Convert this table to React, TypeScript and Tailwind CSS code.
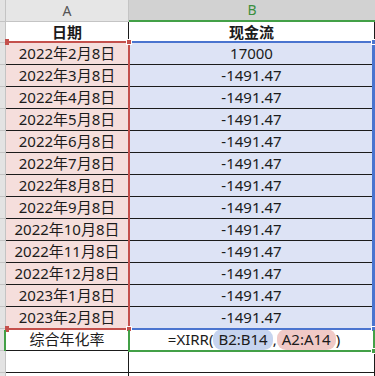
// Spreadsheet view: XIRR cash flow table with range highlights.

const ROWS: { date: string; flow: string }[] = [
  { date: "2022年2月8日", flow: "17000" },
  { date: "2022年3月8日", flow: "-1491.47" },
  { date: "2022年4月8日", flow: "-1491.47" },
  { date: "2022年5月8日", flow: "-1491.47" },
  { date: "2022年6月8日", flow: "-1491.47" },
  { date: "2022年7月8日", flow: "-1491.47" },
  { date: "2022年8月8日", flow: "-1491.47" },
  { date: "2022年9月8日", flow: "-1491.47" },
  { date: "2022年10月8日", flow: "-1491.47" },
  { date: "2022年11月8日", flow: "-1491.47" },
  { date: "2022年12月8日", flow: "-1491.47" },
  { date: "2023年1月8日", flow: "-1491.47" },
  { date: "2023年2月8日", flow: "-1491.47" },
];

export default function App() {
  return (
    <div className="relative h-[376px] w-[375px] overflow-hidden bg-white font-['Noto_Sans','Noto_Sans_CJK_SC',sans-serif] text-[15px] leading-none text-[#1b1b1b]">
      {/* Column headers */}
      <div className="flex h-[22px]">
        <div className="w-[6px] border-r border-b border-[#c4c4c4] bg-[#e3e3e3]" />
        <div className="flex w-[123px] items-center justify-center border-r border-b border-[#c4c4c4] bg-[#e6e6e6] text-[14px] text-[#555]">
          A
        </div>
        <div className="flex flex-1 items-center justify-center border-b-2 border-[#43a047] bg-[#d2d2d2] text-[14px] text-[#3b8f3f]">
          B
        </div>
      </div>

      {/* Title row */}
      <div className="flex h-[20px]">
        <div className="w-[6px] border-r border-[#c4c4c4] bg-[#e3e3e3]" />
        <div className="flex w-[123px] items-center justify-center border-r border-[#1b1b1b] font-bold">日期</div>
        <div className="flex flex-1 items-center justify-center border-r border-[#1b1b1b] font-bold">现金流</div>
      </div>

      {/* Data rows */}
      {ROWS.map((row, i) => (
        <div key={i} className="flex h-[22px]">
          <div className="w-[6px] border-t border-r border-[#c4c4c4] bg-[#e3e3e3]" />
          <div className="flex w-[123px] items-center justify-center border-t border-r border-[#1b1b1b] bg-[#f5dedc]">
            {row.date}
          </div>
          <div className="flex flex-1 items-center justify-center border-t border-r border-[#1b1b1b] bg-[#dde3f5]">
            {row.flow}
          </div>
        </div>
      ))}

      {/* Formula row */}
      <div className="flex h-[22px]">
        <div className="w-[6px] border-t border-r border-[#c4c4c4] bg-[#e3e3e3]" />
        <div className="flex w-[123px] items-center justify-center border-t border-r border-[#1b1b1b]">综合年化率</div>
        <div className="flex flex-1 items-center justify-center border-t border-[#1b1b1b] pl-[4px]">
          <span>=XIRR(</span>
          <span className="rounded-[9px] bg-[#c6d4ef] px-[5px] py-[3px]">B2:B14</span>
          <span>,</span>
          <span className="rounded-[9px] bg-[#f0c9c6] px-[5px] py-[3px]">A2:A14</span>
          <span>)</span>
        </div>
      </div>

      {/* Blank rows */}
      {[0, 1].map((i) => (
        <div key={i} className="flex h-[22px]">
          <div className="w-[6px] border-t border-r border-[#c4c4c4] bg-[#e3e3e3]" />
          <div className="w-[123px] border-t border-r border-[#1b1b1b]" />
          <div className="flex-1 border-t border-r border-[#1b1b1b]" />
        </div>
      ))}

      {/* Range outline B2:B14 */}
      <div className="absolute top-[41px] left-[128px] h-[289px] w-[247px] border-2 border-r-[3px] border-[#4a74cf]" />
      <div className="absolute top-[39px] left-[371px] h-[6px] w-[6px] border border-white bg-[#4a74cf]" />
      <div className="absolute top-[326px] left-[371px] h-[6px] w-[6px] border border-white bg-[#4a74cf]" />

      {/* Range outline A2:A14 */}
      <div className="absolute top-[41px] left-[6px] h-[289px] w-[124px] border-t-2 border-r-2 border-b-2 border-[#c4504c]" />
      <div className="absolute top-[39px] left-[5px] h-[6px] w-[4px] bg-[#c4504c]" />
      <div className="absolute top-[39px] left-[126px] h-[6px] w-[6px] border border-white bg-[#c4504c]" />
      <div className="absolute top-[326px] left-[5px] h-[6px] w-[4px] bg-[#c4504c]" />
      <div className="absolute top-[326px] left-[126px] h-[6px] w-[6px] border border-white bg-[#c4504c]" />

      {/* Active cell B15 */}
      <div className="absolute top-[330px] left-[128px] h-[22px] w-[247px] border-l-2 border-r-2 border-b-2 border-[#43a047]" />
      <div className="absolute top-[348px] left-[371px] h-[6px] w-[6px] border border-white bg-[#43a047]" />
      <div className="absolute top-[330px] left-[4px] h-[21px] w-[2px] bg-[#43a047]" />
    </div>
  );
}
